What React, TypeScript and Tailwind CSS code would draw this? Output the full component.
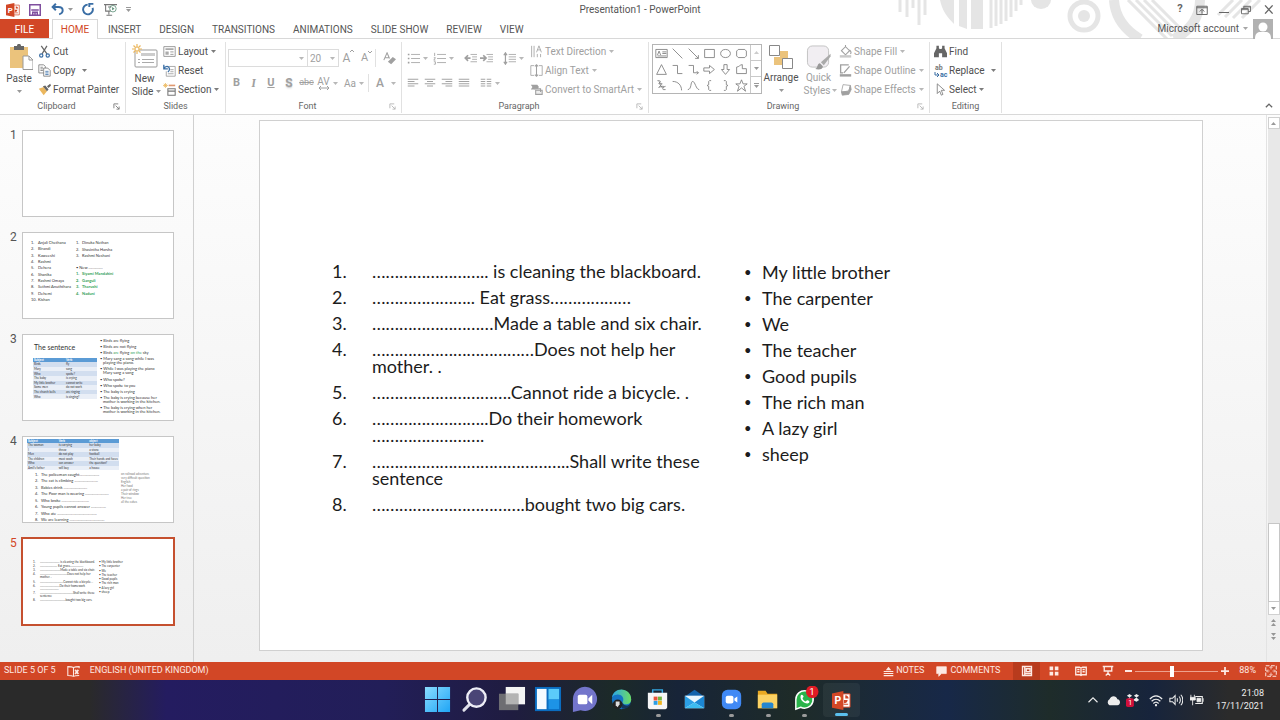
import { ReactNode } from "react";
import { clsx } from "clsx";

interface IconProps {
  children: ReactNode;
  box?: string;
  className?: string;
}

const Icon = ({ children, box = "0 0 16 16", className = "size-[13px]" }: IconProps) => (
  <svg
    viewBox={box}
    className={clsx("shrink-0", className)}
    fill="none"
    stroke="currentColor"
    aria-hidden="true"
  >
    {children}
  </svg>
);

const Caret = ({ className = "" }: { className?: string }) => (
  <svg viewBox="0 0 5 3" className={clsx("h-[3px] w-[5px] shrink-0", className)} aria-hidden="true">
    <path d="M0 0h5L2.500 3z" fill="currentColor" fillOpacity="0.75" />
  </svg>
);

const Separator = () => <span className="h-[18px] w-px shrink-0 bg-[#e1e1e1]" />;

interface GroupProps {
  label: string;
  width: string;
  launcher?: boolean;
  muted?: boolean;
  children: ReactNode;
}

const Group = ({ label, width, launcher = true, muted, children }: GroupProps) => (
  <section
    aria-label={label}
    className={clsx("mt-[3px] mb-px flex shrink-0 flex-col border-r border-[#e1e1e1]", width)}
  >
    <div className="flex h-[58px]">{children}</div>
    <div className="flex h-[14px] items-center text-[9px] leading-3 text-[#666]">
      <span className="flex-1 text-center">{label}</span>
      {launcher && (
        <button
          aria-label={`${label} options`}
          className={clsx("mr-1 flex size-2 items-center", muted ? "text-[#b5b5b5]" : "text-[#777]")}
        >
          <Icon box="0 0 8 8" className="size-[7px]">
            <path d="M1 6V1h5M3 3l4 4M7 4v3H4" />
          </Icon>
        </button>
      )}
    </div>
  </section>
);

interface CommandProps {
  icon: ReactNode;
  label: string;
  caret?: boolean;
  wide?: boolean;
  muted?: boolean;
}

const Command = ({ icon, label, caret, wide, muted }: CommandProps) => (
  <button
    className={clsx(
      "flex h-[19px] items-center gap-[2px] whitespace-nowrap",
      muted ? "text-[#a0a0a0]" : "text-[#505050]"
    )}
  >
    {icon}
    <span>{label}</span>
    {caret && <Caret className={wide ? "ml-1" : "ml-px"} />}
  </button>
);

const Tool = ({ label, width, children }: { label: string; width: string; children: ReactNode }) => (
  <button
    aria-label={label}
    className={clsx("flex h-[18px] shrink-0 items-center justify-center gap-[3px]", width)}
  >
    {children}
  </button>
);

const PowerPointMark = ({ className }: { className: string }) => (
  <svg viewBox="0 0 20 20" className={className} aria-hidden="true">
    <path d="M10 3h9v14h-9z" fill="#fff" stroke="#d24726" />
    <path d="M12.500 5.500v4h4a4 4 0 0 1-4 3.500" fill="#d24726" />
    <path d="M14 4.500a4 4 0 0 1 3.500 3.500H14zM12 13.500h5v1h-5z" fill="#d24726" />
    <path d="M0 2.500 12 0v20L0 17.500z" fill="#d24726" />
    <text x="2.500" y="14" fontSize="11" fontWeight="700" fill="#fff">P</text>
  </svg>
);

const TitleArt = () => (
  <svg
    viewBox="0 0 400 39"
    className="pointer-events-none absolute top-0 right-0 h-[39px] w-[400px]"
    fill="none"
    stroke="#e5e5e5"
    aria-hidden="true"
  >
    <path d="M20 0v12M27 0v17M33 0v8M39 0v25M45 0v15" strokeWidth="3" />
    <path d="M60 0h14v24C67 17 62 10 60 0zM79 0h8v29l-8-3zM91 0h12v29H91z" fill="#e5e5e5" stroke="none" />
    <path d="M111 0v28M116 0v26M121 0v24M126 0v21M131 0v17M136 0v11M141 0v5" strokeWidth="3" />
    <path d="M151 0h20a10 9 0 0 1-20 0z" fill="#e5e5e5" stroke="none" />
    <circle cx="204" cy="16" r="14" strokeWidth="5" />
    <circle cx="204" cy="16" r="6" fill="#e5e5e5" stroke="none" />
    <path d="M234 0c1 17 11 30 26 39M320 0c0 17-10 31-26 39" strokeWidth="10" />
    <path d="m248 0 39 39M256 0l36 36M264 0l32 32M272 0l28 28" strokeWidth="3" />
    <path d="m338 15 15-15M345 17l17-17M353 18l18-18M362 18l18-18" strokeWidth="3" />
  </svg>
);

const TitleBar = () => (
  <div className="relative flex h-[19px] items-center text-[#555]">
    <div className="flex flex-1 items-center pl-[6px]">
      <PowerPointMark className="size-[14px]" />
      <button aria-label="Save" className="ml-[9px] text-[#7f4f9e]">
        <Icon className="size-3">
          <path d="M1 1h14v14H1z" strokeWidth="2" />
          <path d="M3 8h10M5 15v-4h6v4M8 12v3" strokeWidth="2" />
        </Icon>
      </button>
      <button aria-label="Undo" className="ml-[10px] flex items-center gap-1 text-[#3a6ea5]">
        <Icon>
          <path d="M6 1 2 5l4 4M2 5h7c7 0 7 7 1 9" strokeWidth="2.400" />
        </Icon>
        <Caret className="text-[#777]" />
      </button>
      <button aria-label="Redo" className="ml-[9px] text-[#3a6ea5]">
        <Icon>
          <path d="M7 2a6 6 0 1 0 6 4M9 5V1h5" strokeWidth="2.400" />
        </Icon>
      </button>
      <button aria-label="Start from beginning" className="ml-[9px] text-[#777]">
        <Icon>
          <path d="M0 2h16M2 2v8h6M6 10v4M3 15h7M5 5h4" strokeWidth="1.300" />
          <circle cx="11" cy="7" r="4" stroke="#5a8f76" />
          <path d="m10 5 3 2-3 2z" fill="#5a8f76" stroke="none" />
        </Icon>
      </button>
      <button aria-label="Customise toolbar" className="ml-[9px] flex flex-col gap-px text-[#777]">
        <span className="h-px w-[5px] bg-[#999]" />
        <Caret />
      </button>
    </div>
    <h1 className="text-[10px]">Presentation1 - PowerPoint</h1>
    <div className="z-10 flex flex-1 items-center justify-end gap-[11px] pr-[6px] text-[#666]">
      <button aria-label="Help" className="w-[10px] text-[11px] font-bold">?</button>
      <button aria-label="Ribbon display options">
        <Icon className="size-3">
          <path d="M1 3h14v11H1zM1 5h14M8 13V7M5 10l3-3 3 3" strokeWidth="1.300" />
        </Icon>
      </button>
      <button aria-label="Minimise" className="h-3 pt-[6px]">
        <span className="block h-px w-[10px] bg-[#666]" />
      </button>
      <button aria-label="Restore">
        <Icon className="size-3">
          <path d="M2 6h9v7H2zM2 7.500h9M5 6V3h9v7h-3M5 4h9" strokeWidth="1.200" />
        </Icon>
      </button>
      <button aria-label="Close">
        <Icon className="size-[11px]">
          <path d="m3 2 11 12M14 2 3 14" strokeWidth="2" />
        </Icon>
      </button>
    </div>
  </div>
);

const tabs = ["INSERT", "DESIGN", "TRANSITIONS", "ANIMATIONS", "SLIDE SHOW", "REVIEW", "VIEW"];

const TabRow = () => (
  <nav className="relative flex h-5 items-stretch border-b border-[#d8d8d8] text-[10px] text-[#555]">
    <button className="w-[49px] bg-[#d24726] pt-[2px] text-white">FILE</button>
    <button className="z-10 mr-px -mb-px ml-[3px] w-[46px] border border-b-0 border-[#d8d8d8] bg-white text-[#d24726]">
      HOME
    </button>
    {tabs.map((tab) => (
      <button key={tab} className="px-[9px] pt-[2px] whitespace-nowrap">
        {tab}
      </button>
    ))}
    <button className="mr-[7px] ml-auto flex items-center gap-1">
      Microsoft account
      <Caret className="mr-px text-[#888]" />
      <svg viewBox="0 0 20 20" className="size-5" aria-hidden="true">
        <path d="M0 0h20v20H0z" fill="#b1b1b1" />
        <circle cx="10" cy="8" r="4.500" fill="#fff" />
        <path d="M2 20c0-5 2-7 5-7h6c3 0 5 2 5 7z" fill="#fff" />
      </svg>
    </button>
  </nav>
);

const ClipboardGroup = () => (
  <Group label="Clipboard" width="w-[126px]">
    <button className="flex w-[38px] flex-col items-center pt-[2px]">
      <svg viewBox="0 0 24 26" className="ml-1 h-[26px] w-6" aria-hidden="true">
        <path d="M1 3h18v21H1z" fill="#ebc37c" />
        <path d="M5 6V2h3c0-3 4-3 4 0h3v4z" fill="#666" />
        <path d="M14 12h6l4 4v9.500H14z" fill="#fff" stroke="#999" />
        <path d="M20 12v4h4" fill="none" stroke="#999" />
      </svg>
      <span className="mt-[3px] leading-3">Paste</span>
      <Caret className="mt-[5px] text-[#777]" />
    </button>
    <div className="flex flex-col items-start">
      <Command
        label="Cut"
        icon={
          <Icon>
            <path d="m4 1 7 10M11 1 5 11" stroke="#666" strokeWidth="1.500" />
            <circle cx="4" cy="13" r="2" stroke="#3a6ea5" strokeWidth="1.500" />
            <circle cx="12" cy="13" r="2" stroke="#3a6ea5" strokeWidth="1.500" />
          </Icon>
        }
      />
      <Command
        label="Copy"
        caret
        wide
        icon={
          <Icon>
            <path d="M1 1h6l2 2v8H1zM3 4h3M3 6h3M3 8h3" stroke="#777" />
            <path d="M7 5h5l3 3v7H7z" fill="#fff" stroke="#777" />
            <path d="M9 9h4M9 11h4M9 13h4" stroke="#3a6ea5" />
          </Icon>
        }
      />
      <Command
        label="Format Painter"
        icon={
          <Icon>
            <path d="m1 7 6-2 4 5-4 5z" fill="#ebb75e" stroke="none" />
            <path d="m6 4 3-1 4 5-2 2zM11 4l4-3 1 2-3 3z" fill="#666" stroke="none" />
          </Icon>
        }
      />
    </div>
  </Group>
);

const SlidesGroup = () => (
  <Group label="Slides" width="w-[100px]" launcher={false}>
    <button className="flex w-[37px] flex-col items-center pt-[2px]">
      <svg viewBox="0 0 26 26" className="h-[26px] w-[26px]" fill="none" aria-hidden="true">
        <rect x="3" y="6" width="22" height="17" rx="1" fill="#fff" stroke="#999" />
        <path d="M9 9h14v3H9z" fill="#ccc" />
        <path d="M6 15.500h2M10 15.500h12M6 18.500h2M10 18.500h12" stroke="#aaa" />
        <path d="M5 0v10M0 5h10M1.500 1.500l7 7M8.500 1.500l-7 7" stroke="#ebb75e" strokeWidth="1.200" />
        <circle cx="5" cy="5" r="2" fill="#fff" stroke="#ebb75e" />
      </svg>
      <span className="mt-[3px] leading-3">New</span>
      <span className="flex items-center gap-[3px] pl-1 leading-[13px]">
        Slide <Caret className="text-[#777]" />
      </span>
    </button>
    <div className="flex flex-col items-start">
      <Command
        label="Layout"
        caret
        icon={
          <Icon>
            <path d="M1 2h14v12H1z" stroke="#888" />
            <path d="M3 4h10v2H3zM3 8h4v4H3z" fill="#aaa" stroke="none" />
            <path d="M9 8.500h4M9 11.500h4" stroke="#888" />
          </Icon>
        }
      />
      <Command
        label="Reset"
        icon={
          <Icon>
            <path d="M7 3h8v12H4V9M9 7h4M9 9.500h4M6 12h7" stroke="#999" />
            <path d="M1 1v5h5M1 6c2-4 6-4 7 0 0 2-1 3-2 4" stroke="#3a6ea5" strokeWidth="1.600" />
          </Icon>
        }
      />
      <Command
        label="Section"
        caret
        icon={
          <Icon>
            <path d="M3 0v6M0 3h6M1 1l4 4M5 1 1 5" stroke="#ebb75e" />
            <path d="M7 3h8" stroke="#e0986f" strokeWidth="2" />
            <path d="M6 7h9v8H6zM6 10h9" stroke="#777" strokeWidth="1.300" />
          </Icon>
        }
      />
    </div>
  </Group>
);

const FontGroup = () => (
  <Group label="Font" width="w-[176px]" muted>
    <div className="flex flex-col gap-[7px] pt-[7px] pl-[2px] text-[#a0a0a0]">
      <div className="flex items-center">
        <span className="flex h-[18px] w-[80px] items-center border border-[#dcdcdc] pr-[3px]">
          <select aria-label="Font" disabled className="min-w-0 flex-1 appearance-none" />
          <Caret />
        </span>
        <span className="-ml-px flex h-[18px] w-8 items-center border border-[#dcdcdc] pr-[3px] pl-[2px]">
          <select aria-label="Font size" disabled className="min-w-0 flex-1 appearance-none">
            <option>20</option>
          </select>
          <Caret />
        </span>
        <Tool label="Increase font size" width="w-[19px]">
          <span className="flex text-[12px]">
            A
            <Icon box="0 0 4 8" className="h-2 w-1"><path d="m0 3 2-2 2 2" /></Icon>
          </span>
        </Tool>
        <Tool label="Decrease font size" width="w-[17px]">
          <span className="flex text-[11px]">
            A
            <Icon box="0 0 4 8" className="h-2 w-1"><path d="m0 1 2 2 2-2" /></Icon>
          </span>
        </Tool>
        <Separator />
        <Tool label="Clear formatting" width="w-[27px]">
          <Icon>
            <path d="m1 10 4-9 3 7M2 7h5" strokeWidth="1.300" />
            <path d="m6 12 6-6 4 3-6 6z" fill="currentColor" stroke="none" />
          </Icon>
        </Tool>
      </div>
      <div className="flex items-center">
        <Tool label="Bold" width="w-[17px]"><b className="text-[11px]">B</b></Tool>
        <Tool label="Italic" width="w-[17px]"><i className="font-serif text-[12px] font-bold">I</i></Tool>
        <Tool label="Underline" width="w-[18px]"><u className="text-[11px] font-bold">U</u></Tool>
        <Tool label="Shadow" width="w-[18px]"><b className="text-[12px] text-shadow-sm">S</b></Tool>
        <Tool label="Strikethrough" width="w-[17px]"><s className="text-[9px]">abc</s></Tool>
        <Tool label="Character spacing" width="w-[25px]">
          <span className="flex flex-col items-center leading-[9px]">
            AV
            <Icon box="0 0 12 4" className="h-1 w-3">
              <path d="M1 2h10M3 0 1 2l2 2M9 0l2 2-2 2" />
            </Icon>
          </span>
          <Caret />
        </Tool>
        <Tool label="Change case" width="w-[28px]">Aa<Caret /></Tool>
        <Separator />
        <Tool label="Font colour" width="w-[34px]">
          <span className="pr-1 text-[12px] font-medium">A</span>
          <Caret />
        </Tool>
      </div>
    </div>
  </Group>
);

const alignments = [
  { name: "Align left", d: "M1 3h14M1 6h9M1 9h14M1 12h9" },
  { name: "Centre", d: "M1 3h14M4 6h8M1 9h14M4 12h8" },
  { name: "Align right", d: "M1 3h14M6 6h9M1 9h14M6 12h9" },
  { name: "Justify", d: "M1 3h14M1 6h14M1 9h14M1 12h14" },
];

const ParagraphGroup = () => (
  <Group label="Paragraph" width="w-[247px]" muted>
    <div className="flex w-[128px] flex-col gap-[7px] pt-[7px] pl-[2px] text-[#a0a0a0]">
      <div className="flex items-center">
        <Tool label="Bullets" width="w-[26px]">
          <Icon>
            <path d="M5 3h11M5 8h11M5 13h11" />
            <path d="M1 3h2M1 8h2M1 13h2" strokeWidth="2" />
          </Icon>
          <Caret />
        </Tool>
        <Tool label="Numbering" width="w-[26px]">
          <Icon>
            <path d="M5 3h11M5 8h11M5 13h11M2 1v4M1 7h2l-2 3h2M1 12h2v3H1" />
          </Icon>
          <Caret />
        </Tool>
        <span className="mx-[3px]"><Separator /></span>
        <Tool label="Decrease indent" width="w-[16px]">
          <Icon>
            <path d="M8 3h8M10 6h6M10 9h6M8 12h8" />
            <path d="M8 7.500H2M5 4 1.500 7.500 5 11" strokeWidth="2" />
          </Icon>
        </Tool>
        <Tool label="Increase indent" width="w-[16px]">
          <Icon>
            <path d="M8 3h8M10 6h6M10 9h6M8 12h8" />
            <path d="M0 7.500h6M4 4l3.500 3.500L4 11" strokeWidth="2" />
          </Icon>
        </Tool>
        <span className="mx-[3px]"><Separator /></span>
        <Tool label="Line spacing" width="w-[26px]">
          <Icon>
            <path d="M7 3h9M7 6h9M7 9h9M7 12h9" />
            <path d="M3 2v12M1 4l2-3 2 3M1 12l2 3 2-3" strokeWidth="1.500" />
          </Icon>
          <Caret />
        </Tool>
      </div>
      <div className="flex items-center">
        {alignments.map((item) => (
          <Tool key={item.name} label={item.name} width="w-[17px]">
            <Icon className="size-3"><path d={item.d} strokeWidth="1.300" /></Icon>
          </Tool>
        ))}
        <span className="ml-1"><Separator /></span>
        <Tool label="Columns" width="w-[28px]">
          <Icon className="size-3">
            <path d="M1 3h6M9 3h6M1 6h6M9 6h6M1 9h6M9 9h6M1 12h6M9 12h6" strokeWidth="1.300" />
          </Icon>
          <Caret />
        </Tool>
      </div>
    </div>
    <div className="flex flex-col items-start">
      <Command
        label="Text Direction"
        caret
        muted
        icon={<Icon><path d="M2 1v14M5 1v14M9 11v4M13 11v4M8 9l3-8 3 8M9 6h4" /></Icon>}
      />
      <Command
        label="Align Text"
        caret
        muted
        icon={
          <Icon>
            <path d="M5 2H1v12h4M11 2h4v12h-4" />
            <path d="M8 1v14M6 3l2-2 2 2M6 13l2 2 2-2" strokeWidth="1.300" />
          </Icon>
        }
      />
      <Command
        label="Convert to SmartArt"
        caret
        muted
        icon={
          <Icon>
            <path d="M1 2h8l2 3-2 3H1l2-3z" fill="currentColor" stroke="none" />
            <path d="M5 7h8v4M7 9h8v5H7z" fill="#eee" strokeWidth="1.300" />
          </Icon>
        }
      />
    </div>
  </Group>
);

const shapes = [
  "M1 3h14v10H1zM3 10l2-5 2 5M9 6h5M9 8h5M3 11h11",
  "m2 2 12 12",
  "m2 2 12 12M14 10v4h-4",
  "M2 3h12v10H2z",
  "M8 3c8 0 8 10 0 10S0 3 8 3z",
  "M4 3h8l2 2v6l-2 2H4l-2-2V5z",
  "M8 2 14 14H2z",
  "M2 3h6v10h6",
  "M2 3h6v9h6M12 10l2 2-2 2",
  "M1 6h7V3l6 5-6 5v-3H1z",
  "M6 2h4v6h3l-5 6-5-6h3z",
  "M2 5c3 0 4-3 7-3v5h5v6H2z",
  "M3 2c8 0 0 4 2 4s6-2 2 2-3 2 2 1-4 5 4 4M5 3c3 6 1 9 8 6",
  "M2 3c7 0 11 5 11 11",
  "M1 13C6 13 4 3 7 3s4 10 8 10",
  "M10 2H8L7 3v4L5 8l2 1v4l1 1h2",
  "M6 2h2l1 1v4l2 1-2 1v4l-1 1H6",
  "m8 1 2 5h5l-4 3 2 6-5-4-5 4 2-6-4-3h5z",
];

const DrawingGroup = () => (
  <Group label="Drawing" width="w-[281px]" muted>
    <div className="mt-[2px] ml-[3px] flex h-[50px] w-[110px] shrink-0 border border-[#b5b5b5] text-[#777]">
      <div className="grid flex-1 grid-cols-6 place-items-center">
        {shapes.map((d) => (
          <Icon key={d}><path d={d} /></Icon>
        ))}
      </div>
      <div className="grid w-[11px] grid-rows-3 divide-y divide-[#c9c9c9] border-l border-[#c9c9c9]">
        <button aria-label="Previous shapes" className="grid place-items-center text-[#bbb]">
          <Caret className="rotate-180" />
        </button>
        <button aria-label="Next shapes" className="grid place-items-center"><Caret /></button>
        <button aria-label="More shapes" className="flex flex-col items-center justify-center gap-px">
          <span className="h-px w-[5px] bg-[#999]" />
          <Caret />
        </button>
      </div>
    </div>
    <button className="flex w-[38px] flex-col items-center pt-[3px]">
      <svg viewBox="0 0 24 25" className="h-[25px] w-6" aria-hidden="true">
        <path d="M11 6h8v8h-8zM5 12h8v8H5z" fill="#ebc37c" />
        <path d="M.500.500h10v10H.500zM13.500 13.500h10v10h-10z" fill="#fff" stroke="#888" />
      </svg>
      <span className="mt-[2px] leading-3">Arrange</span>
      <Caret className="mt-[5px] text-[#777]" />
    </button>
    <button className="flex w-[37px] flex-col items-center pt-[3px] text-[#a0a0a0]">
      <svg viewBox="0 0 26 26" className="h-[25px] w-[26px]" aria-hidden="true">
        <rect x="1" y="1" width="22" height="22" rx="5" fill="#f1eef2" stroke="#c2c2c2" />
        <path d="M25 9 15 18l3 3 7-9z" fill="#aaa" />
        <path d="M14 19c-3 0-2 5-5 6 5 1 8 0 8-3z" fill="#999" />
      </svg>
      <span className="mt-[2px] leading-3">Quick</span>
      <span className="flex items-center gap-[2px] pl-1 leading-[13px]">
        Styles <Caret />
      </span>
    </button>
    <div className="flex flex-col items-start pl-[2px]">
      <Command
        label="Shape Fill"
        caret
        muted
        icon={
          <Icon>
            <path d="m3 7 5-5 5 5-5 5zM8 2V0M13 6c2 2 2 4 1 5" strokeWidth="1.300" />
            <path d="M1 14h14" stroke="#c9c9c9" strokeWidth="3" />
          </Icon>
        }
      />
      <Command
        label="Shape Outline"
        caret
        muted
        icon={
          <Icon>
            <path d="M12 1H2v10h3M13 3 6 11" strokeWidth="1.600" />
            <path d="M1 14h14" strokeWidth="3" />
          </Icon>
        }
      />
      <Command
        label="Shape Effects"
        caret
        muted
        icon={
          <Icon>
            <path d="m5 2 9 1-2 7-9 1z" fill="#fff" />
            <path d="m3 11 9-1 2-7 1 5-3 6-8 1z" fill="currentColor" />
          </Icon>
        }
      />
    </div>
  </Group>
);

const EditingGroup = () => (
  <Group label="Editing" width="w-[72px]" launcher={false}>
    <div className="flex flex-col items-start pl-1">
      <Command
        label="Find"
        icon={
          <Icon>
            <path
              d="M3 1h3v3l1 1h2l1-1V1h3v3l3 6v5h-6v-5H6v5H0v-5l3-6z"
              fill="#666"
              stroke="none"
            />
          </Icon>
        }
      />
      <Command
        label="Replace"
        caret
        wide
        icon={
          <svg viewBox="0 0 14 14" className="-mr-px size-[14px] shrink-0" aria-hidden="true">
            <text x="1" y="6" fontSize="7" fontWeight="700" fill="#777">ab</text>
            <text x="6" y="13" fontSize="7" fontWeight="700" fill="#3a6ea5">ac</text>
            <path d="M1 8v3h4M3 9l2 2-2 2" fill="none" stroke="#3a6ea5" />
          </svg>
        }
      />
      <Command
        label="Select"
        caret
        icon={<Icon><path d="M4 1v12l3-3 2 5 2-1-2-5h4z" stroke="#777" /></Icon>}
      />
    </div>
  </Group>
);

const Ribbon = () => (
  <div className="flex h-[76px] border-b border-[#d8d8d8] bg-white text-[10px] text-[#505050]">
    <ClipboardGroup />
    <SlidesGroup />
    <FontGroup />
    <ParagraphGroup />
    <DrawingGroup />
    <EditingGroup />
    <button aria-label="Collapse the ribbon" className="mt-auto mr-[6px] mb-[3px] ml-auto text-[#666]">
      <Icon className="size-[10px]"><path d="m3 10 5-5 5 5" strokeWidth="2.200" /></Icon>
    </button>
  </div>
);

const questions = [
  ["…………………….. is cleaning the blackboard."],
  ["………………….. Eat grass………………"],
  ["………………………Made a table and six chair."],
  ["………………………………Does not help her", "mother. ."],
  ["………………………….Cannot ride a bicycle. ."],
  ["……………………..Do their homework", "……………………."],
  ["……………………………………..Shall write these", "sentence"],
  ["…………………………….bought two big cars."],
];

const answers = [
  "My little brother",
  "The carpenter",
  "We",
  "The teacher",
  "Good pupils",
  "The rich man",
  "A lazy girl",
  "sheep",
];

const Slide = () => (
  <article className="mt-[5px] mr-[63px] mb-[11px] ml-[65px] flex flex-1 items-start border border-[#d0d0d0] bg-white pt-[142px] pl-[72px] font-[Lato,sans-serif] text-[18px] leading-[17px] text-[#1c1c1c]">
    <ol className="flex w-[412px] flex-col gap-[9px]">
      {questions.map((lines, i) => (
        <li key={i} className="flex">
          <span className="w-10 shrink-0">{i + 1}.</span>
          <p className="whitespace-nowrap">
            {lines.map((line) => (
              <span key={line} className="block">{line}</span>
            ))}
          </p>
        </li>
      ))}
    </ol>
    <ul className="flex flex-col gap-[9px] pt-px">
      {answers.map((answer) => (
        <li key={answer} className="flex whitespace-nowrap">
          <span className="w-[18px] text-[13px]">•</span>
          {answer}
        </li>
      ))}
    </ul>
  </article>
);

interface NameListProps {
  names: string[];
  className: string;
  indent: string;
}

const NameList = ({ names, className, indent }: NameListProps) => (
  <ol className={clsx("flex flex-col justify-between", className)}>
    {names.map((name, i) => (
      <li key={name} className="flex">
        <span className={clsx("shrink-0", indent)}>{i + 1}.</span>
        {name}
      </li>
    ))}
  </ol>
);

const pupils = [
  "Anjali Chethana",
  "Birandi",
  "Kaweeshi",
  "Rashmi",
  "Dehera",
  "Shanika",
  "Rashmi Omaya",
  "Sethmi Anuththara",
  "Dehemi",
  "Kishan",
];

const guests = ["Dinuka Nethan", "Shasintha Harsha", "Rashmi Neshani"];

const newPupils = ["Siyami Mandakini", "Ganguli", "Tharushi", "Naduni"];

const ThumbNames = () => (
  <div className="flex pt-[7px] pl-2 text-[4px] leading-[6px] whitespace-nowrap">
    <NameList names={pupils} className="h-[63px] w-[45px]" indent="w-[7px]" />
    <div>
      <NameList names={guests} className="h-[19px]" indent="w-[6px]" />
      <p className="pt-[6px]">• New ...............</p>
      <NameList
        names={newPupils}
        className="h-[26px] font-bold text-[#2e9e55]"
        indent="w-[6px]"
      />
    </div>
  </div>
);

interface MiniTableProps {
  head: string[];
  rows: string[][];
  className: string;
}

const MiniTable = ({ head, rows, className }: MiniTableProps) => (
  <table className={clsx("table-fixed text-[3px] leading-[4px] whitespace-nowrap", className)}>
    <thead className="bg-[#5b9bd5] text-white">
      <tr>
        {head.map((cell) => (
          <th key={cell} className="p-0 pl-px text-left">{cell}</th>
        ))}
      </tr>
    </thead>
    <tbody>
      {rows.map((row, i) => (
        <tr key={i} className="odd:bg-[#d2deef] even:bg-[#eaeff7]">
          {row.map((cell) => (
            <td key={cell} className="p-0 pl-px">{cell}</td>
          ))}
        </tr>
      ))}
    </tbody>
  </table>
);

const verbRows = [
  ["Birds", "fly"],
  ["Mary", "sang"],
  ["Who", "spoke?"],
  ["The baby", "is crying"],
  ["My little brother", "cannot write"],
  ["Some men", "do not work"],
  ["The church bells", "are ringing"],
  ["Who", "is singing?"],
];

const ThumbSentence = () => (
  <div className="flex text-[4px] leading-[4px] whitespace-nowrap">
    <div className="w-[77px] pl-[10px]">
      <h3 className="pt-[9px] pl-px text-[7px] leading-[7px]">The sentence</h3>
      <MiniTable className="mt-[7px] h-[41px] w-16" head={["Subject", "Verb"]} rows={verbRows} />
    </div>
    <ul className="flex h-[79px] flex-col justify-between pt-1">
      <li>• Birds are flying</li>
      <li>• Birds are not flying</li>
      <li>
        • Birds <span className="text-[#2e9e55]">are</span> flying{" "}
        <span className="text-[#2e9e55]">on the</span> sky
      </li>
      <li>• Mary sang a song while I was<br />&nbsp;&nbsp; playing the piano.</li>
      <li>• While I was playing the piano<br />&nbsp;&nbsp; Mary sang a song</li>
      <li>• Who spoke?</li>
      <li>• Who spoke to you</li>
      <li>• The baby is crying</li>
      <li>• The baby is crying because her<br />&nbsp;&nbsp; mother is working in the kitchen.</li>
      <li>• The baby is crying when her<br />&nbsp;&nbsp; mother is working in the kitchen.</li>
    </ul>
  </div>
);

const objectRows = [
  ["The woman", "is carrying", "her baby"],
  ["I", "threw", "a stone"],
  ["Men", "do not play", "football"],
  ["The children", "must wash", "Their hands and faces"],
  ["Who", "can answer", "the question?"],
  ["Amil's father", "will buy", "a house"],
];

const blanks = [
  "The policeman caught.....................",
  "The cat is climbing .........................",
  "Babies drink .........................",
  "The Poor man is wearing .........................",
  "Who broke .............................",
  "Young pupils cannot answer ................",
  "Who ate ..........................................",
  "We are learning .....................................",
];

const hints = [
  "on railroad adventure",
  "very difficult question",
  "English",
  "Her food",
  "a pair of rings",
  "Their window",
  "Her tree",
  "all the cakes",
];

const ThumbObjects = () => (
  <div className="pt-[2px] pl-1 whitespace-nowrap">
    <MiniTable className="h-[31px] w-[92px]" head={["Subject", "Verb", "object"]} rows={objectRows} />
    <div className="flex pt-[2px] text-[4px] leading-[6px]">
      <NameList names={blanks} className="h-[51px] w-[94px] pl-2" indent="w-[6px]" />
      <ul className="text-[3px] leading-[4px] text-[#777]">
        {hints.map((hint) => (
          <li key={hint}>{hint}</li>
        ))}
      </ul>
    </div>
  </div>
);

const ThumbExercise = () => (
  <div className="flex items-start pt-[23px] pl-[11px] text-[3px] leading-[3px] whitespace-nowrap">
    <ol className="flex h-[41px] w-[66px] flex-col justify-between">
      {questions.map((lines, i) => (
        <li key={i} className="flex">
          <span className="w-[7px]">{i + 1}.</span>
          <p>
            {lines.map((line) => (
              <span key={line} className="block">{line}</span>
            ))}
          </p>
        </li>
      ))}
    </ol>
    <ul className="flex h-[33px] flex-col justify-between">
      {answers.map((answer) => (
        <li key={answer}>• {answer}</li>
      ))}
    </ul>
  </div>
);

const thumbs = [null, <ThumbNames />, <ThumbSentence />, <ThumbObjects />, <ThumbExercise />];

const ThumbPane = () => (
  <ol className="flex w-[194px] shrink-0 flex-col gap-[15px] border-r border-[#d0d0d0] pt-[15px]">
    {thumbs.map((content, i) => {
      const active = i === thumbs.length - 1;
      return (
        <li key={i} className="flex">
          <span
            className={clsx(
              "w-[22px] pl-[10px] text-[12px] leading-[10px]",
              active ? "text-[#d24726]" : "text-[#555]"
            )}
          >
            {i + 1}
          </span>
          <div
            className={clsx(
              "h-[87px] w-[152px] overflow-hidden bg-white font-[Lato,sans-serif] text-[#333]",
              active
                ? "outline-2 -outline-offset-1 outline-[#c5502f]"
                : "border border-[#c6c6c6]"
            )}
          >
            {content}
          </div>
        </li>
      );
    })}
  </ol>
);

const ScrollBar = () => (
  <div className="flex w-[14px] flex-col items-center border-l border-[#e3e3e3] text-[#777]">
    <button aria-label="Scroll up" className="mt-[2px] grid h-3 w-3 place-items-center border border-[#d0d0d0] bg-white">
      <Caret className="rotate-180" />
    </button>
    <div className="w-3 flex-1 bg-[#e8e8e8]" />
    <div className="h-[79px] w-3 border border-[#c6c6c6] bg-white" />
    <button aria-label="Scroll down" className="grid h-[13px] w-3 place-items-center border border-t-0 border-[#d0d0d0] bg-white">
      <Caret />
    </button>
    <button aria-label="Previous slide" className="flex h-[14px] flex-col items-center justify-center gap-px">
      <Caret className="rotate-180" />
      <Caret className="rotate-180" />
    </button>
    <button aria-label="Next slide" className="mb-[19px] flex h-[14px] flex-col items-center justify-center gap-px">
      <Caret />
      <Caret />
    </button>
  </div>
);

const views = [
  { name: "Normal", d: "M2 2h12v12H2zM5 2v12M7 5h5v4H7zM5 11.500h9" },
  { name: "Slide sorter", d: "M3 3h3v3H3zM10 3h3v3h-3zM3 10h3v3H3zM10 10h3v3h-3z" },
  { name: "Reading view", d: "M1 3h5l2 1 2-1h5v10h-5l-2 1-2-1H1zM8 4v10M3 6h3M3 9h3M10 6h3M10 9h3" },
  { name: "Slide show", d: "M1 2h14M3 2v6h10V2M8 8v4M5 14l3-3 3 3" },
];

const StatusBar = () => (
  <footer className="flex h-[18px] items-center bg-[#d24726] text-[9px] text-[#fde9e3]">
    <span className="pl-1">SLIDE 5 OF 5</span>
    <button aria-label="Spelling" className="ml-[11px]">
      <Icon>
        <path d="M8 3C6 2 3 2 1 2v11c3 0 5 0 7 1 2-1 4-1 7-1M8 3v11M8 3c2-1 4-1 7-1v2" strokeWidth="1.300" />
        <path d="m10 6 4 5M14 6l-4 5" strokeWidth="2" />
      </Icon>
    </button>
    <button className="ml-[10px]">ENGLISH (UNITED KINGDOM)</button>
    <button className="ml-auto flex items-center gap-[2px]">
      <Icon className="size-[11px]">
        <path d="m8 1 4 5H4z" fill="currentColor" stroke="none" />
        <path d="M1 8h14M1 11h14M1 14h14" strokeWidth="1.500" />
      </Icon>
      NOTES
    </button>
    <button className="ml-[12px] flex items-center gap-[3px]">
      <Icon className="size-[11px]">
        <path d="M1 1h14v10H8l-4 4v-4H1z" fill="currentColor" />
      </Icon>
      COMMENTS
    </button>
    <div className="ml-[13px] flex h-full">
      {views.map((view, i) => (
        <button
          key={view.name}
          aria-label={view.name}
          className={clsx("flex w-[27px] items-center justify-center", i === 0 && "bg-[#b83b1d]")}
        >
          <Icon className="size-3">
            <path d={view.d} strokeWidth="1.800" fill={i === 1 ? "currentColor" : "none"} />
          </Icon>
        </button>
      ))}
    </div>
    <button aria-label="Zoom out" className="ml-1 grid h-full w-[7px] place-items-center">
      <span className="h-[2px] w-[7px] bg-current" />
    </button>
    <input
      type="range"
      aria-label="Zoom"
      min={10}
      max={190}
      defaultValue={88}
      className="mx-[3px] h-3 w-[83px] appearance-none bg-transparent [&::-webkit-slider-runnable-track]:h-px [&::-webkit-slider-runnable-track]:bg-[#eda18d] [&::-webkit-slider-thumb]:-mt-[5px] [&::-webkit-slider-thumb]:h-[11px] [&::-webkit-slider-thumb]:w-1 [&::-webkit-slider-thumb]:appearance-none [&::-webkit-slider-thumb]:bg-white"
    />
    <button aria-label="Zoom in">
      <Icon className="size-2"><path d="M8 0v16M0 8h16" strokeWidth="3.500" /></Icon>
    </button>
    <span className="ml-[10px]">88%</span>
    <button aria-label="Fit slide" className="mr-[3px] ml-[9px]">
      <Icon className="size-3">
        <path d="M1 1h14v14H1z" strokeWidth="1.300" strokeDasharray="5 2" />
        <path d="M8 2v4M8 10v4M2 8h4M10 8h4M6 4l2-2 2 2M6 12l2 2 2-2M4 6 2 8l2 2M12 6l2 2-2 2" />
      </Icon>
    </button>
  </footer>
);

const apps = [
  {
    name: "Start",
    art: (
      <>
        <defs>
          <linearGradient id="start" x1="0" y1="0" x2="1" y2="1">
            <stop stopColor="#8adcff" />
            <stop offset="1" stopColor="#1fa5f5" />
          </linearGradient>
        </defs>
        <path d="M1 1h12.500v12.500H1zM14.500 1H27v12.500H14.500zM1 14.500h12.500V27H1zM14.500 14.500H27V27H14.500z" fill="url(#start)" />
      </>
    ),
  },
  {
    name: "Search",
    art: (
      <>
        <path d="m3 25 7-7" stroke="#dfe0ea" strokeWidth="3" strokeLinecap="round" />
        <circle cx="16" cy="12" r="9.500" fill="#4a4576" stroke="#eeeef6" strokeWidth="2.500" />
      </>
    ),
  },
  {
    name: "Task view",
    art: (
      <>
        <path d="M8 1h20v18H8z" fill="#f4f4f4" />
        <path d="M1 8h20v17H1z" fill="#6d6d72" />
        <path d="M8 8h13v11H8z" fill="#b3b3b3" />
      </>
    ),
  },
  {
    name: "Widgets",
    art: (
      <>
        <path d="M1 1h27v25H1z" fill="#0a6cc0" />
        <path d="M3 3h10v21H3z" fill="#f4faff" />
        <path d="M15 3h11v11H15z" fill="#5ccbfa" />
        <path d="M15 14h11v10H15z" fill="#1d93e6" />
      </>
    ),
  },
  {
    name: "Chat",
    art: (
      <>
        <path d="M2 27V13a12.500 12.500 0 1 1 8 12z" fill="#7375cb" />
        <rect x="7" y="9" width="10" height="10" rx="2" fill="#fff" />
        <path d="m18 13 4-4v10l-4-4z" fill="#fff" />
      </>
    ),
  },
  {
    name: "Edge",
    art: (
      <>
        <defs>
          <linearGradient id="edge">
            <stop stopColor="#2aa5e8" />
            <stop offset="1" stopColor="#6ddc64" />
          </linearGradient>
        </defs>
        <circle cx="14" cy="14" r="10" fill="#1573c4" />
        <path d="M4 13C5 0 24 1 24 14c0 6-8 6-9 3 3-5-2-9-6-8-3 0-5 2-5 4z" fill="url(#edge)" />
        <path d="M15 17c1 4 6 4 9 1-2 5-7 6-10 5z" fill="#14345c" />
        <circle cx="10" cy="19" r="5" fill="#222" />
        <path d="M8 16h4v3l-2 3-2-2z" fill="#ddd" />
      </>
    ),
  },
  {
    name: "Store",
    running: true,
    art: (
      <>
        <path d="M9 8V4h10v4" stroke="#33a9e4" strokeWidth="1.500" />
        <path d="M4 7h20v15c0 1-1 2-2 2H6c-1 0-2-1-2-2z" fill="#f6f6f6" />
        <path d="M10 11h4v4h-4z" fill="#e8553a" />
        <path d="M14.500 11h4v4h-4z" fill="#73b53c" />
        <path d="M10 15.500h4v4h-4z" fill="#2c9fe5" />
        <path d="M14.500 15.500h4v4h-4z" fill="#f2b51f" />
      </>
    ),
  },
  {
    name: "Mail",
    art: (
      <>
        <path d="M4 11 14 4l10 7z" fill="#1263ac" />
        <path d="M4 10h20v13H4z" fill="#e9f6fd" />
        <path d="m4 10 10 7-10 6z" fill="#2c9fe5" />
        <path d="m24 10-10 7 10 6z" fill="#1c86d3" />
        <path d="m4 23 10-6 10 6z" fill="#3dbcf0" />
      </>
    ),
  },
  {
    name: "Zoom",
    running: true,
    art: (
      <>
        <rect x="4" y="4" width="20" height="20" rx="6" fill="#4089f5" />
        <rect x="8" y="10" width="8" height="8" rx="2" fill="#fff" />
        <path d="m17 13 3-2v6l-3-2z" fill="#fff" />
      </>
    ),
  },
  {
    name: "Explorer",
    running: true,
    art: (
      <>
        <path d="M4 5h8l2 3h10v15H4z" fill="#e9a922" />
        <path d="M4 9h20v14H4z" fill="#fbd264" />
        <path d="M8 23v-4c0-1 1-2 2-2h8c1 0 2 1 2 2v4z" fill="#2586cf" />
      </>
    ),
  },
  {
    name: "WhatsApp",
    running: true,
    art: (
      <>
        <path d="M5 24V14a9 9 0 1 1 5 8z" fill="#29b34a" stroke="#fff" strokeWidth="1.500" />
        <path d="M10 10c1-2 3 0 3 1s-1 1-1 2 2 3 3 3 1-2 3-1 1 3-1 3c-4 0-8-4-7-8z" fill="#fff" />
        <circle cx="22" cy="6" r="6.500" fill="#e01b24" />
        <text x="19" y="9.500" fontSize="10" fill="#fff">1</text>
      </>
    ),
  },
];

const Taskbar = () => (
  <div className="flex h-10 items-stretch bg-[linear-gradient(90deg,#2a2a2a_0%,#2a2a2a_7%,#241c60_13%,#221e58_30%,#1f1c40_40%,#1c2a28_48%,#172438_53%,#1e2b28_62%,#172848_74%,#1e2c2a_82%,#17243c_90%,#2b2b2b_96%,#2b2b2b_100%)]">
    <div className="flex-1 pl-4" />
    <div className="grid w-[440px] grid-cols-12">
      {apps.map((app) => (
        <button key={app.name} aria-label={app.name} className="flex flex-col items-center pt-[6px]">
          <svg viewBox="0 0 29 29" className="h-[28px] w-[28px]" fill="none" aria-hidden="true">
            {app.art}
          </svg>
          {app.running && <span className="h-[3px] w-[5px] rounded-full bg-[#9a9a9a]" />}
        </button>
      ))}
      <button
        aria-label="PowerPoint"
        className="my-[3px] flex flex-col items-center rounded-sm bg-white/5 pt-2"
      >
        <PowerPointMark className="size-[19px]" />
        <span className="mt-[3px] h-[3px] w-[13px] rounded-full bg-[#5bc0ee]" />
      </button>
    </div>
    <div className="flex flex-1 items-center justify-end pr-4 text-[#eee]">
      <button aria-label="Hidden icons">
        <Icon className="size-3"><path d="m2 11 6-6 6 6" strokeWidth="1.500" /></Icon>
      </button>
      <Icon className="ml-[7px] size-[14px]">
        <path d="M4 14a4 4 0 0 1 0-7c2-5 8-4 9 0 4 0 4 7 0 7z" fill="#ececec" stroke="none" />
      </Icon>
      <Icon className="ml-[6px] size-[14px]">
        <path d="m4 1 3 2-3 2-3-2zM12 1l3 2-3 2-3-2zM4 5l4 3-4 2-3-2zM12 5l3 3-3 2-4-2z" fill="currentColor" stroke="none" />
        <rect x="0" y="6" width="9" height="10" rx="2" fill="#d0103a" stroke="none" />
        <text x="2.500" y="14" fontSize="8" fill="#fff" stroke="none">1</text>
      </Icon>
      <Icon className="ml-[9px] size-[14px]">
        <path d="M1 7c4-5 10-5 14 0M3 9.500c3-3 7-3 10 0M5 12c2-2 4-2 6 0" strokeWidth="1.500" />
        <circle cx="8" cy="14" r="1.300" fill="currentColor" stroke="none" />
      </Icon>
      <Icon className="ml-[6px] size-[14px]">
        <path d="M1 6h3l3-3v10l-3-3H1zM9.500 6v4M11.500 4c2 2 2 6 0 8M13.500 2c3 3 3 9 0 12" strokeWidth="1.200" />
      </Icon>
      <Icon className="ml-[7px] size-[14px]">
        <path d="M6 4h8v8H6" strokeWidth="1.300" />
        <path d="M8 6h4v4H8zM15 6v4M1 2v3M5 2v3M0 5h6v3H0zM3 8v6" fill="currentColor" />
      </Icon>
      <div className="ml-[12px] text-right text-[9px] leading-[13px]">
        <div>21:08</div>
        <div>17/11/2021</div>
      </div>
    </div>
  </div>
);

export default function App() {
  return (
    <div className="flex min-h-screen flex-col overflow-hidden bg-white font-[Roboto,sans-serif]">
      <header className="relative">
        <TitleArt />
        <TitleBar />
        <TabRow />
      </header>
      <Ribbon />
      <main className="flex flex-1 bg-linear-to-b from-[#fdfdfd] to-[#efefef]">
        <ThumbPane />
        <Slide />
        <ScrollBar />
      </main>
      <StatusBar />
      <Taskbar />
    </div>
  );
}
